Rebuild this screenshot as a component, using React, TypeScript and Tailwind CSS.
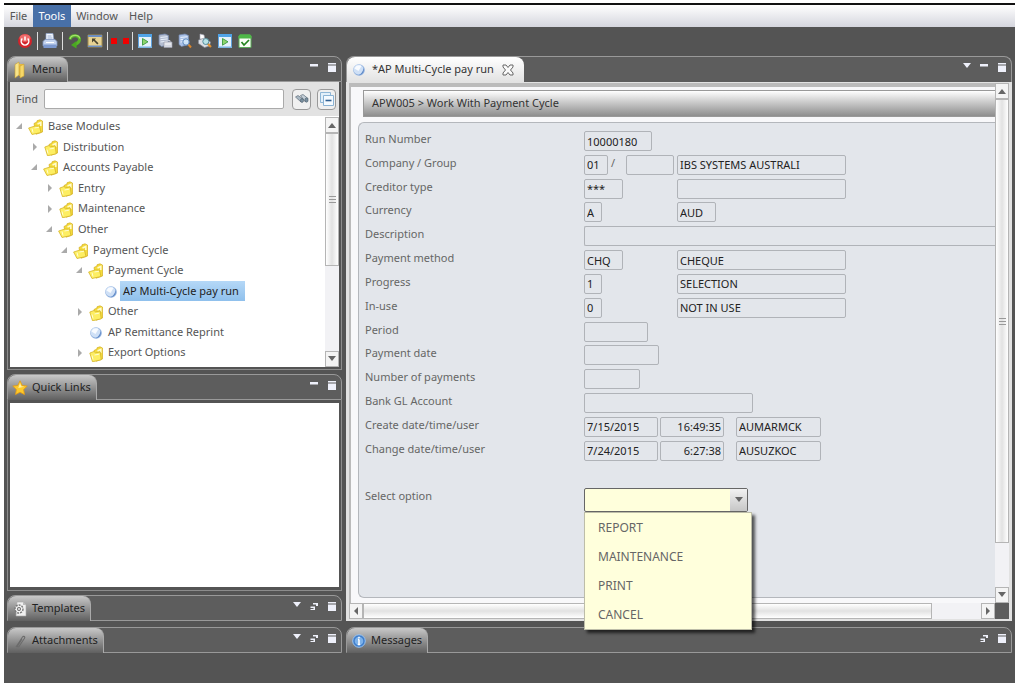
import { useState } from "react";
import type { ReactNode } from "react";

type TreeItem = {
  label: string;
  level: number;
  kind: "open" | "closed" | "leaf";
};

type Field = {
  name: string;
  value?: string;
  width: string;
  right?: boolean;
};

type FormRow = {
  label: string;
  first: Field[];
  rest?: Field[];
  slash?: boolean;
};

const tree: TreeItem[] = [
  { label: "Base Modules", level: 0, kind: "open" },
  { label: "Distribution", level: 1, kind: "closed" },
  { label: "Accounts Payable", level: 1, kind: "open" },
  { label: "Entry", level: 2, kind: "closed" },
  { label: "Maintenance", level: 2, kind: "closed" },
  { label: "Other", level: 2, kind: "open" },
  { label: "Payment Cycle", level: 3, kind: "open" },
  { label: "Payment Cycle", level: 4, kind: "open" },
  { label: "AP Multi-Cycle pay run", level: 5, kind: "leaf" },
  { label: "Other", level: 4, kind: "closed" },
  { label: "AP Remittance Reprint", level: 4, kind: "leaf" },
  { label: "Export Options", level: 4, kind: "closed" },
];

const rows: FormRow[] = [
  { label: "Run Number", first: [{ name: "run", value: "10000180", width: "w-17" }] },
  {
    label: "Company / Group",
    slash: true,
    first: [
      { name: "company", value: "01", width: "w-6" },
      { name: "group", width: "w-12" },
    ],
    rest: [{ name: "companyName", value: "IBS SYSTEMS AUSTRALI", width: "w-[169px]" }],
  },
  {
    label: "Creditor type",
    first: [{ name: "creditor", value: "***", width: "w-[39px]" }],
    rest: [{ name: "creditorName", width: "w-[169px]" }],
  },
  {
    label: "Currency",
    first: [{ name: "currency", value: "A", width: "w-[18px]" }],
    rest: [{ name: "currencyCode", value: "AUD", width: "w-[39px]" }],
  },
  { label: "Description", first: [{ name: "description", width: "flex-1 rounded-r-none border-r-0" }] },
  {
    label: "Payment method",
    first: [{ name: "method", value: "CHQ", width: "w-[39px]" }],
    rest: [{ name: "methodName", value: "CHEQUE", width: "w-[169px]" }],
  },
  {
    label: "Progress",
    first: [{ name: "progress", value: "1", width: "w-[18px]" }],
    rest: [{ name: "progressName", value: "SELECTION", width: "w-[169px]" }],
  },
  {
    label: "In-use",
    first: [{ name: "inUse", value: "0", width: "w-[18px]" }],
    rest: [{ name: "inUseName", value: "NOT IN USE", width: "w-[169px]" }],
  },
  { label: "Period", first: [{ name: "period", width: "w-16" }] },
  { label: "Payment date", first: [{ name: "payDate", width: "w-[75px]" }] },
  { label: "Number of payments", first: [{ name: "payments", width: "w-14" }] },
  { label: "Bank GL Account", first: [{ name: "bank", width: "w-[169px]" }] },
  {
    label: "Create date/time/user",
    first: [
      { name: "createDate", value: "7/15/2015", width: "w-[74px]" },
      { name: "createTime", value: "16:49:35", width: "w-16", right: true },
      { name: "createUser", value: "AUMARMCK", width: "ml-[10px] w-[85px]" },
    ],
  },
  {
    label: "Change date/time/user",
    first: [
      { name: "changeDate", value: "7/24/2015", width: "w-[74px]" },
      { name: "changeTime", value: "6:27:38", width: "w-16", right: true },
      { name: "changeUser", value: "AUSUZKOC", width: "ml-[10px] w-[85px]" },
    ],
  },
];

const options = ["REPORT", "MAINTENANCE", "PRINT", "CANCEL"];

/* ---------- icons ---------- */

const FolderIcon = ({ open }: { open: boolean }) => (
  <svg viewBox="0 0 16 16" className="h-4 w-4 shrink-0">
    <path d="M6 4.5 9 3V1.800L12 .8l2.500 1.200V13L8 15.200Z" fill="#f5dc3c" stroke="#d2ae22" strokeWidth=".7" />
    <path d="m9.500 5 3.300-1.500v3.500" fill="none" stroke="#fffbd0" strokeWidth="1.500" />
    <path
      d={open ? "M.6 9 7 7l4.500.2 1.500 6.300-9 2Z" : "M1.800 7 6 5.500l1.500 1.300 4.800-.8.9 7.800-8.700 2Z"}
      fill="#fdee62"
      stroke="#d6b528"
      strokeWidth=".8"
    />
    <path d="m4 9.500 1 4M6.500 9l4.500-.8" stroke="#fffdd2" strokeWidth="1" />
  </svg>
);

const BallIcon = () => (
  <svg viewBox="0 0 14 14" className="h-3.5 w-3.5 shrink-0">
    <circle cx="7" cy="7" r="5.800" fill="#8fb0de" />
    <circle cx="6.500" cy="6.500" r="5" fill="#cfe0f6" />
    <path d="M2.500 5.500C3.500 2.500 7 1.300 9.500 3L6.500 8Z" fill="#f8fbff" />
    <path d="M11.500 5c1.300 3.200-.8 6.800-4.700 7.200C9.500 10.700 11 8.500 11.500 5Z" fill="#5f88c6" />
  </svg>
);

const MenuTabIcon = () => (
  <svg viewBox="0 0 14 18" className="h-[18px] w-3.5">
    <path d="M2 3.500 6 1v13l-4 3Z" fill="#f8e48a" stroke="#c79d2f" strokeWidth=".6" />
    <path d="M6 3h4v11l-4 1Z" fill="#e8b93e" />
    <path d="m7 5 4-2v12l-4 2Z" fill="#f6d768" stroke="#c79d2f" strokeWidth=".6" />
  </svg>
);

const StarIcon = () => (
  <svg viewBox="0 0 16 16" className="h-4 w-4">
    <path
      d="m8 .8 2.200 4.600 5 .7-3.600 3.500.9 5L8 12.200l-4.500 2.400.9-5L.8 6.100l5-.7Z"
      fill="#fdc92b"
      stroke="#e39a14"
      strokeWidth=".8"
    />
    <path d="m8 3 1.300 3.300 3 .5-6 1.200Z" fill="#fff0a0" />
  </svg>
);

const TemplateIcon = () => (
  <svg viewBox="0 0 14 16" className="h-4 w-3.5">
    <path d="M4 1h6l3 3v11H3Z" fill="#f0f0f0" stroke="#aaa" strokeWidth=".6" />
    <path d="M10 1v3h3" fill="#bbb" />
    <circle cx="6" cy="8" r="4" fill="#f6f6f6" stroke="#777" strokeDasharray="2 1" strokeWidth="1.400" />
    <circle cx="6" cy="8" r="1.700" fill="#ccc" stroke="#666" strokeWidth=".8" />
  </svg>
);

const ClipIcon = () => (
  <svg viewBox="0 0 14 16" className="h-4 w-3.5">
    <path
      d="m3 14 6.500-10c1-1.300 3-.3 2 1.200L6 13.500c-.8 1-2 .2-1.300-.8L9 6"
      fill="none"
      stroke="#6b6b6b"
      strokeWidth="1.100"
    />
  </svg>
);

const InfoIcon = () => (
  <svg viewBox="0 0 14 14" className="h-3.5 w-3.5">
    <circle cx="7" cy="7" r="6.300" fill="#3f7dca" stroke="#9cc4ee" strokeWidth="1" />
    <circle cx="7" cy="7" r="4.300" fill="#7db2ea" />
    <path d="M7 2.800v1.500M7 5.500v5M5.800 10.500h2.400M6 5.500h1" stroke="#fff" strokeWidth="1.500" />
  </svg>
);

const PowerIcon = () => (
  <svg viewBox="0 0 16 16" className="h-4 w-4">
    <circle cx="8" cy="8" r="7" fill="#d3232a" />
    <ellipse cx="8" cy="5" rx="5.500" ry="3.800" fill="#ee6b6b" />
    <path d="M5.300 5.500a3.800 3.800 0 1 0 5.400 0M8 3.500v4" fill="none" stroke="#fff" strokeWidth="1.500" />
  </svg>
);

const PrinterIcon = () => (
  <svg viewBox="0 0 16 16" className="h-4 w-4">
    <path d="M4 .5h7l1 7.500H4Z" fill="#f3f7fd" stroke="#8da2c8" strokeWidth=".7" />
    <path d="M5.500 3h4M5.500 5h5" stroke="#9ab0d6" />
    <path d="M1 8.500 3 6.500h10l2 2V13H1Z" fill="#c3d2ee" stroke="#7d94c0" strokeWidth=".8" />
    <path d="M1.500 11.500h13V15h-13Z" fill="#7d99cf" />
    <path d="M4 9.500h8" stroke="#fff" />
  </svg>
);

const RefreshIcon = () => (
  <svg viewBox="0 0 16 16" className="h-4 w-4">
    <path
      d="M3 6.500C3.500 3.500 6 2.500 8.500 2.700c3 .3 4.300 2.300 4 4.300-.3 2.300-2 3.500-4.500 4.500"
      fill="none"
      stroke="#58b52a"
      strokeWidth="3"
    />
    <path d="M3 6C3.700 3.300 6 2.200 8.500 2.300c2.500.2 4 1.500 4.200 3.200" fill="none" stroke="#a5e06c" strokeWidth="1.200" />
    <path d="M4 12 9.500 8v7.500Z" fill="#4aa822" />
  </svg>
);

const RestoreViewIcon = () => (
  <svg viewBox="0 0 16 16" className="h-4 w-4">
    <path d="M1 2h14v12H1Z" fill="#e6d293" stroke="#a08c50" />
    <path d="M1 2h14v2H1ZM1 12.500h14V14H1Z" fill="#6e8fc2" />
    <path d="M5 5.500h4l-1.200 1.200 3.700 3.600-1.200 1.200-3.600-3.700L5 9.500Z" fill="#4a4530" />
  </svg>
);

const RunIcon = () => (
  <svg viewBox="0 0 16 16" className="h-4 w-4">
    <path d="M1.500 1.500h13v13h-13Z" fill="#e4f1fb" stroke="#5d9fdb" />
    <path d="M1 1h14v3H1Z" fill="#4fa3e8" />
    <path d="M1 13.500h14V15H1Z" fill="#7ab4e2" />
    <path d="m5.500 5.500 5.500 3.300-5.500 3.400Z" fill="#8ed46e" stroke="#3a9a3f" strokeWidth=".9" />
  </svg>
);

const ServerIcon = ({ lens, tone }: { lens?: boolean; tone: string }) => (
  <svg viewBox="0 0 16 16" className="h-4 w-4">
    <path d="m2 2 6-1 3.500 1.500v9L4.500 13.500 2 11.500Z" fill={tone} stroke="#7388b0" strokeWidth=".7" />
    <path d="M3.500 4.500 10.500 3.700M3.500 6.700l7-.8M3.500 9l7-.8" stroke="#eaf1fb" />
    {lens ? (
      <>
        <path d="m11 11 3 3.500" stroke="#d9862c" strokeWidth="2" />
        <circle cx="9" cy="9" r="3.200" fill="#cfe6fa" fillOpacity=".9" stroke="#5d88bd" />
      </>
    ) : (
      <>
        <path d="M7 9h8v5.500H7Z" fill="#e6e8ee" stroke="#9a9cab" strokeWidth=".7" />
        <path d="M9 9V7.500h4V9M8 13h6" fill="none" stroke="#c3c8d6" />
      </>
    )}
  </svg>
);

const PrintPreviewIcon = () => (
  <svg viewBox="0 0 16 16" className="h-4 w-4">
    <path d="M3 1 7 2l1 5-5-1Z" fill="#fff" stroke="#aab" strokeWidth=".6" />
    <path d="m1.500 7 6-2 6 4-1 4-5 1.500-6-4Z" fill="#dcdfe4" stroke="#878d99" strokeWidth=".7" />
    <path d="m10.500 10.500 3.500 3.500" stroke="#e09132" strokeWidth="2.200" />
    <circle cx="8.800" cy="8.500" r="3" fill="#b9e3e6" stroke="#558c9c" />
  </svg>
);

const CheckIcon = () => (
  <svg viewBox="0 0 16 16" className="h-4 w-4">
    <path d="M2 3h12v11.500H2Z" fill="#fafff7" stroke="#5cab58" />
    <path d="M1.500 3 3 1.300h10L14.500 3v2.500h-13Z" fill="#4fb848" />
    <path d="m4.500 9 2.500 3 5-5" fill="none" stroke="#24831f" strokeWidth="1.700" />
  </svg>
);

const CloseIcon = () => (
  <svg viewBox="0 0 12 12" className="h-3 w-3">
    <path
      d="M1 1h3l2 2.500L8 1h3v2L8.500 6 11 9v2H8L6 8.500 4 11H1V9l2.500-3L1 3Z"
      fill="#fafafa"
      stroke="#666"
      strokeWidth="1"
    />
  </svg>
);

const BinocularsIcon = () => (
  <svg viewBox="0 0 16 12" className="h-3 w-4">
    <path d="M1.500 4 4 2.500l5 3.500-2 3Z" fill="#a9b7c3" stroke="#5d6c79" strokeWidth=".7" />
    <path d="m6.500 2.500 2.500-1 5 4-2.500 3.500Z" fill="#c5d0d9" stroke="#5d6c79" strokeWidth=".7" />
    <ellipse cx="12.500" cy="7" rx="1.600" ry="2.200" fill="#7b91a1" stroke="#4b5c69" strokeWidth=".6" />
    <ellipse cx="8" cy="7.500" rx="1.500" ry="2" fill="#7b91a1" stroke="#4b5c69" strokeWidth=".6" />
  </svg>
);

const CollapseAllIcon = () => (
  <svg viewBox="0 0 16 16" className="h-4 w-4">
    <path d="M1.500 1.500h10v10h-10Z" fill="#e3f0fa" stroke="#8fb6d6" />
    <path d="M4.500 4.500h10v10h-10Z" fill="#f4faff" stroke="#8bb3d4" />
    <path d="M6.500 9.500h6" stroke="#2f5f91" strokeWidth="1.600" />
  </svg>
);

const Triangle = ({ dir, className }: { dir: "up" | "down" | "left" | "right"; className: string }) => {
  const paths = {
    up: "M0 7 4 2l4 5Z",
    down: "M0 1h8L4 6Z",
    left: "M6 0v8L2 4Z",
    right: "M2 0v8l4-4Z",
  };
  return (
    <svg viewBox="0 0 8 8" className={className}>
      <path d={paths[dir]} fill="currentColor" />
    </svg>
  );
};

/* ---------- view parts ---------- */

const ViewButtons = ({ menu, restore }: { menu?: boolean; restore?: boolean }) => (
  <div className="ml-auto flex items-start gap-2 pt-[5px] pr-1 text-[#eef0fa]">
    {menu && (
      <button aria-label="View menu">
        <Triangle dir="down" className="h-2 w-2" />
      </button>
    )}
    <button aria-label={restore ? "Restore" : "Minimize"}>
      <svg viewBox="0 0 10 10" className="h-[10px] w-[10px]">
        {restore ? (
          <path d="M4 2h5v3H7V3.500H4ZM1.500 5.500h4.500V9H1.500V8h3V7h-3Z" fill="currentColor" />
        ) : (
          <path d="M1 2h8v2.500H1Z" fill="currentColor" />
        )}
      </svg>
    </button>
    <button aria-label="Maximize">
      <svg viewBox="0 0 10 10" className="h-[10px] w-[10px]">
        <path d="M1 1h8v1.500H1ZM1 3.500h8V10H1Z" fill="currentColor" />
      </svg>
    </button>
  </div>
);

const ViewHead = ({
  icon,
  title,
  menu,
  restore,
}: {
  icon: ReactNode;
  title: string;
  menu?: boolean;
  restore?: boolean;
}) => (
  <div className="flex h-[26px] shrink-0 rounded-t-lg border border-[#999] bg-[#5d5d5d]">
    <h2 className="-mb-px flex items-center gap-1 rounded-t-lg border-r border-[#aaa] bg-linear-to-b from-[#c9c9c9] to-[#606060] pr-[5px] pl-1 text-[#222]">
      <span className="flex w-4 justify-center">{icon}</span>
      {title}
    </h2>
    <ViewButtons menu={menu} restore={restore} />
  </div>
);

const arrowBox = "flex shrink-0 items-center justify-center border border-[#b5b5b5] bg-[#f4f4f4] text-[#666]";

const VScroll = ({ thumb }: { thumb: string }) => (
  <div className="flex w-[14px] shrink-0 flex-col bg-[#f2f2f5]">
    <button aria-label="Scroll up" className={`${arrowBox} h-4`}>
      <Triangle dir="up" className="h-2 w-2" />
    </button>
    <div className="min-h-0 flex-1">
      <div
        className={`${thumb} flex flex-col items-center justify-center gap-[2px] border border-[#b5b5b5] bg-linear-to-r from-white via-[#e2e2e2] to-white`}
      >
        <i className="h-px w-[7px] bg-[#999]" />
        <i className="h-px w-[7px] bg-[#999]" />
        <i className="h-px w-[7px] bg-[#999]" />
      </div>
    </div>
    <button aria-label="Scroll down" className={`${arrowBox} h-4`}>
      <Triangle dir="down" className="h-2 w-2" />
    </button>
  </div>
);

const FormField = ({ field, label }: { field: Field; label: string }) => (
  <input
    id={field.name}
    aria-label={label}
    defaultValue={field.value}
    readOnly
    className={`${field.width} ${field.right ? "text-right" : ""} h-5 min-w-0 rounded-xs border border-[#b0b3b8] bg-transparent px-[2px] text-[#222] outline-none`}
  />
);

const MenuBar = () => (
  <nav className="flex h-6 border-t-2 border-[#111] bg-linear-to-b from-white to-[#d5d6de] text-[#555]">
    <button className="w-[29px]">File</button>
    <button className="w-[38px] bg-[#4870a8] text-white">Tools</button>
    <button className="w-[52px]">Window</button>
    <button className="w-9">Help</button>
  </nav>
);

const Separator = () => <i className="h-[18px] w-px bg-[#ddd]" />;

const ToolBar = () => (
  <div className="flex h-[27px] items-center gap-1 pl-[13px]">
    <button aria-label="Exit"><PowerIcon /></button>
    <Separator />
    <button aria-label="Print"><PrinterIcon /></button>
    <Separator />
    <button aria-label="Refresh"><RefreshIcon /></button>
    <button aria-label="Restore view"><RestoreViewIcon /></button>
    <div className="flex items-center gap-[3px]">
      <Separator />
      <button aria-label="Record" className="flex w-[18px] justify-between">
        <i className="h-[6px] w-[6px] bg-[#f00000]" />
        <i className="h-[6px] w-[6px] bg-[#f00000]" />
      </button>
      <Separator />
    </div>
    <div className="flex gap-1">
      <button aria-label="Run"><RunIcon /></button>
      <button aria-label="Spool"><ServerIcon tone="#b3bcd0" /></button>
      <button aria-label="Inspect"><ServerIcon tone="#a9c1e8" lens /></button>
      <button aria-label="Print preview"><PrintPreviewIcon /></button>
      <button aria-label="Submit"><RunIcon /></button>
      <button aria-label="Confirm"><CheckIcon /></button>
    </div>
  </div>
);

const TreeRow = ({ item, selected, onSelect }: { item: TreeItem; selected: boolean; onSelect: () => void }) => (
  <li className="flex items-center" style={{ paddingLeft: 3 + item.level * 15 }}>
    <span className="flex w-[11px] shrink-0 text-[#aaa]">
      {item.kind === "closed" && <Triangle dir="right" className="h-2 w-2" />}
      {item.kind === "open" && (
        <svg viewBox="0 0 6 6" className="h-[6px] w-[6px]">
          <path d="M6 0v6H0Z" fill="currentColor" />
        </svg>
      )}
    </span>
    <span className="flex w-[18px] shrink-0 justify-center pt-[2px]">
      {item.kind === "leaf" ? <BallIcon /> : <FolderIcon open={item.kind === "open"} />}
    </span>
    <button
      onClick={onSelect}
      className={`h-full px-[3px] ${selected ? "bg-linear-to-b from-[#b5d8f7] to-[#8fc0ec] pr-[6px] text-[#222]" : ""}`}
    >
      {item.label}
    </button>
  </li>
);

const MenuView = () => {
  const [selected, setSelected] = useState(8);
  return (
    <section>
      <ViewHead icon={<MenuTabIcon />} title="Menu" />
      <div className="border-x border-b border-[#8c8c8c] px-[2px] pb-[2px]">
        <div className="flex h-[34px] items-center bg-[#e2e2e2] pr-[3px] pl-[6px] text-[#555]">
          <label htmlFor="find" className="w-7">Find</label>
          <input id="find" className="h-5 min-w-0 flex-1 rounded-xs border border-[#aaa] bg-white px-1" />
          <button aria-label="Search" className="ml-2 flex h-[21px] w-[19px] items-center justify-center rounded-sm border border-[#999] bg-[#f0f0f0]">
            <BinocularsIcon />
          </button>
          <button aria-label="Collapse all" className="ml-[6px] flex h-[21px] w-[19px] items-center justify-center rounded-sm border border-[#999] bg-[#f0f0f0]">
            <CollapseAllIcon />
          </button>
        </div>
        <div className="flex h-[251px] bg-white pt-px">
          <ul className="-mt-px grid h-[247px] flex-1 grid-rows-12 pl-[3px] text-[#555]">
            {tree.map((item, i) => (
              <TreeRow key={i} item={item} selected={i === selected} onSelect={() => setSelected(i)} />
            ))}
          </ul>
          <VScroll thumb="h-[61%]" />
        </div>
      </div>
    </section>
  );
};

const PaymentForm = () => {
  const [option, setOption] = useState("");
  return (
    <form className="mt-[5px] ml-[7px] flex-1 rounded-tl-md rounded-bl-md border border-r-0 border-[#b4b7bc] bg-[#e3e6eb] pt-2 pl-[6px] text-[#666]">
      <div className="grid h-[381px] grid-rows-16">
        {rows.map((row) => (
          <div key={row.label} className="flex items-start">
            <label htmlFor={row.first[0].name} className="w-[219px] shrink-0 leading-4">
              {row.label}
            </label>
            <div className={row.rest ? "flex w-[93px] gap-[3px]" : "flex flex-1 gap-[2px]"}>
              <FormField field={row.first[0]} label={row.label} />
              {row.slash && <span className="w-3 leading-4">/</span>}
              {row.first.slice(1).map((f) => (
                <FormField key={f.name} field={f} label={f.name} />
              ))}
            </div>
            {row.rest?.map((f) => <FormField key={f.name} field={f} label={f.name} />)}
          </div>
        ))}
        <div className="row-start-16 flex items-start">
          <label htmlFor="option" className="w-[219px] shrink-0 leading-4">Select option</label>
          <div className="relative">
            <select
              id="option"
              value={option}
              onChange={(e) => setOption(e.target.value)}
              className="block h-6 w-[164px] appearance-none rounded-xs border border-[#666] bg-[#ffffdc] px-1"
            >
              <option value="" />
              {options.map((o) => (
                <option key={o}>{o}</option>
              ))}
            </select>
            <span className="pointer-events-none absolute inset-y-px right-px flex w-[17px] items-center justify-center bg-linear-to-b from-[#f2f2f2] to-[#c6c6c6]">
              <Triangle dir="down" className="h-2 w-2" />
            </span>
            <ul className="absolute top-full left-0 z-10 w-[168px] border border-[#bdbda8] bg-[#ffffdc] text-xs shadow-[3px_3px_3px_rgba(0,0,0,0.65)]">
              {options.map((o) => (
                <li key={o}>
                  <button type="button" onClick={() => setOption(o)} className="h-[29px] w-full px-[13px] text-left">
                    {o}
                  </button>
                </li>
              ))}
            </ul>
          </div>
        </div>
      </div>
    </form>
  );
};

const EditorView = () => (
  <section className="flex flex-1 flex-col">
    <div className="flex h-[26px] shrink-0 rounded-t-lg border border-b-0 border-[#999] bg-[#5d5d5d]">
      <h1 className="flex items-center rounded-t-lg bg-linear-to-b from-white to-[#e2e2e2] pr-[10px] pl-[5px] text-[#333]">
        <BallIcon />
        <span className="mr-2 ml-[6px]">*AP Multi-Cycle pay run</span>
        <button aria-label="Close tab"><CloseIcon /></button>
      </h1>
      <ViewButtons menu />
    </div>
    <div className="flex flex-1 flex-col bg-[#e2e2e2] px-[3px] pt-px pb-[2px]">
      <div className="flex flex-1">
        <div className="flex min-w-0 flex-1 flex-col border-t-4 border-l-2 border-[#bbb] bg-[#f8f8fa] pt-[3px] pb-[5px]">
          <div className="ml-3 flex h-[27px] items-center border-t border-b border-l border-[#999] bg-linear-to-b from-white to-[#8e8e8e] pl-2 text-[#333]">
            APW005 &gt; Work With Payment Cycle
          </div>
          <PaymentForm />
        </div>
        <VScroll thumb="h-[91%]" />
      </div>
      <div className="flex h-4">
        <button aria-label="Scroll left" className={`${arrowBox} w-[14px]`}>
          <Triangle dir="left" className="h-2 w-2" />
        </button>
        <div className="flex-1 bg-[#f2f2f5]">
          <div className="h-full w-[92%] border border-[#b5b5b5] bg-linear-to-b from-white via-[#e2e2e2] to-white" />
        </div>
        <button aria-label="Scroll right" className={`${arrowBox} w-[14px]`}>
          <Triangle dir="right" className="h-2 w-2" />
        </button>
        <div className="w-[14px] bg-[#5d5d5d]" />
      </div>
    </div>
  </section>
);

export default function App() {
  return (
    <div className="flex min-h-screen bg-white pt-[3px] pr-[9px] pb-[5px] pl-1 font-['Noto_Sans',sans-serif] text-[11px]">
      <div className="flex flex-1 flex-col bg-[#545454]">
        <MenuBar />
        <ToolBar />
        <main className="flex flex-1 gap-1 px-[3px] pt-[2px] pb-7">
          <div className="flex w-[335px] shrink-0 flex-col gap-1">
            <MenuView />
            <section className="flex flex-1 flex-col">
              <ViewHead icon={<StarIcon />} title="Quick Links" />
              <div className="flex flex-1 border-x border-b border-[#8c8c8c] px-[2px] pt-[3px] pb-[3px]">
                <div className="flex-1 bg-white" />
              </div>
            </section>
            <section className="h-7">
              <ViewHead icon={<TemplateIcon />} title="Templates" menu restore />
            </section>
            <section className="h-7">
              <ViewHead icon={<ClipIcon />} title="Attachments" menu restore />
            </section>
          </div>
          <div className="flex min-w-0 flex-1 flex-col gap-[6px]">
            <EditorView />
            <section className="h-7">
              <ViewHead icon={<InfoIcon />} title="Messages" restore />
            </section>
          </div>
        </main>
      </div>
    </div>
  );
}
